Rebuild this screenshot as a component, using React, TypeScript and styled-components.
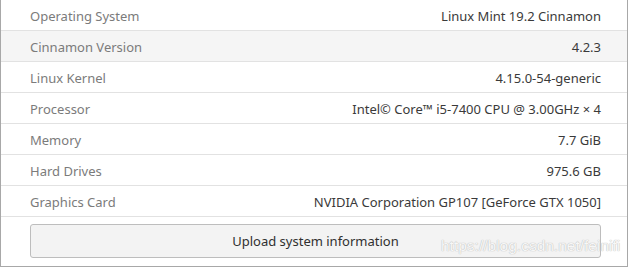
import React from 'react';
import styled, { createGlobalStyle } from 'styled-components';

const Global = createGlobalStyle`
  html, body { margin: 0; padding: 0; background: #ffffff; }
  body { font-family: "Noto Sans", "DejaVu Sans", sans-serif; }
`;

const Frame = styled.div`
  position: relative;
  box-sizing: border-box;
  width: 628px;
  height: 267px;
  border: 1px solid #a8a8a8;
  border-top: none;
  background: #ffffff;
  display: flex;
  flex-direction: column;
`;

const Row = styled.div<{ $shaded?: boolean }>`
  box-sizing: border-box;
  height: 31px;
  flex: 0 0 31px;
  display: flex;
  align-items: center;
  justify-content: space-between;
  padding: 2px 26px 0 29px;
  border-bottom: 1px solid #e2e2e2;
  background: ${p => (p.$shaded ? '#f5f5f5' : '#ffffff')};
  font-size: 13px;
`;

const Label = styled.span`
  color: #7b7b7b;
`;

const Value = styled.span`
  color: #3a3a3a;
`;

const Footer = styled.div`
  flex: 1;
  display: flex;
  align-items: flex-start;
  padding: 7px 26px 0 29px;
`;

const UploadButton = styled.button`
  box-sizing: border-box;
  width: 100%;
  height: 34px;
  padding-top: 1px;
  border: 1px solid #bdbdbd;
  border-radius: 3px;
  background: #f3f3f3;
  color: #303030;
  font-family: "Noto Sans", "DejaVu Sans", sans-serif;
  font-size: 13px;
  cursor: pointer;
`;

const Watermark = styled.div`
  position: absolute;
  left: 440px;
  top: 237px;
  font-family: "Liberation Sans", Arial, sans-serif;
  font-size: 15.5px;
  color: #f7f7f7;
  text-shadow: 0 0 1px #b8b8b8, 0 0 1px #c8c8c8;
  pointer-events: none;
  white-space: nowrap;
`;

const rows: [string, string][] = [
  ['Operating System', 'Linux Mint 19.2 Cinnamon'],
  ['Cinnamon Version', '4.2.3'],
  ['Linux Kernel', '4.15.0-54-generic'],
  ['Processor', 'Intel© Core™ i5-7400 CPU @ 3.00GHz × 4'],
  ['Memory', '7.7 GiB'],
  ['Hard Drives', '975.6 GB'],
  ['Graphics Card', 'NVIDIA Corporation GP107 [GeForce GTX 1050]'],
];

export default function App() {
  return (
    <>
      <Global />
      <Frame>
        {rows.map(([k, v], i) => (
          <Row key={k} $shaded={i === 1}>
            <Label>{k}</Label>
            <Value>{v}</Value>
          </Row>
        ))}
        <Footer>
          <UploadButton>Upload system information</UploadButton>
        </Footer>
        <Watermark>https://blog.csdn.net/feinifi</Watermark>
      </Frame>
    </>
  );
}
